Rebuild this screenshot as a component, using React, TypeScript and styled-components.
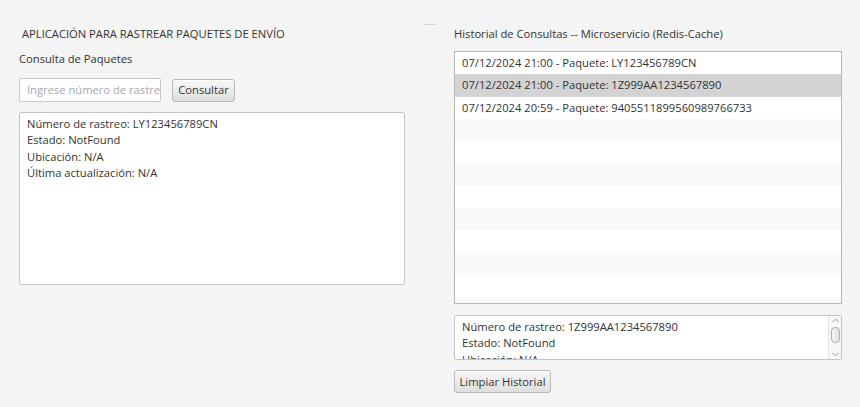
import React from "react";
import styled, { createGlobalStyle } from "styled-components";

const Global = createGlobalStyle`
  html, body { margin: 0; padding: 0; background: #f4f4f4; }
  body { font-family: "Open Sans", "Noto Sans", sans-serif; font-size: 11.2px; color: #333; }
`;

const Page = styled.div`
  width: 860px;
  height: 407px;
  box-sizing: border-box;
  padding: 24px 0 0 19px;
  display: grid;
  grid-template-columns: 386px 49px 388px;
  align-items: start;
  background: #f4f4f4;
`;

const Column = styled.div`
  display: flex;
  flex-direction: column;
`;

const Divider = styled.div`
  display: flex;
  justify-content: center;
  &::before {
    content: "";
    width: 10px;
    height: 1px;
    background: #d0d0d0;
  }
`;

const Title = styled.div<{ $indent?: number }>`
  margin-top: 2px;
  height: 16px;
  line-height: 16px;
  padding-left: ${(p) => p.$indent ?? 0}px;
  white-space: nowrap;
  color: #333;
`;

const Subtitle = styled.div`
  margin-top: 9px;
  height: 16px;
  line-height: 16px;
`;

const Row = styled.div`
  margin-top: 11px;
  display: flex;
  gap: 11px;
  align-items: center;
`;

const Input = styled.div`
  width: 142px;
  height: 24px;
  box-sizing: border-box;
  border: 1px solid #c8c8c8;
  border-radius: 2px;
  background: #fff;
  padding: 0 7px;
  line-height: 21px;
  color: #a9a9a9;
  white-space: nowrap;
  overflow: hidden;
`;

const Button = styled.div<{ $width: number }>`
  width: ${(p) => p.$width}px;
  height: 23px;
  box-sizing: border-box;
  border: 1px solid #b8b8b8;
  border-radius: 3px;
  background: linear-gradient(#f8f8f8, #dedede);
  box-shadow: inset 0 1px 0 #ffffff;
  display: flex;
  align-items: center;
  justify-content: center;
  padding-bottom: 1px;
  color: #333;
  white-space: nowrap;
`;

const TextArea = styled.div<{ $height: number; $top: number }>`
  position: relative;
  margin-top: ${(p) => p.$top}px;
  height: ${(p) => p.$height}px;
  box-sizing: border-box;
  border: 1px solid #c4c4c4;
  border-radius: 2px;
  background: #fff;
  padding: 3px 7px;
  overflow: hidden;
`;

const Line = styled.div`
  height: 16.3px;
  line-height: 16px;
  white-space: nowrap;
`;

const List = styled.div`
  margin-top: 9px;
  height: 253px;
  box-sizing: border-box;
  border: 1px solid #b9b9b9;
  background: #fff;
  overflow: hidden;
`;

const ListRow = styled.div<{ $selected?: boolean; $odd?: boolean }>`
  height: 22.3px;
  line-height: 22px;
  padding-left: 7px;
  white-space: nowrap;
  background: ${(p) => (p.$selected ? "#d3d3d3" : p.$odd ? "#f9f9f9" : "#ffffff")};
`;

const ScrollBar = styled.div`
  position: absolute;
  top: 0;
  right: 0;
  bottom: 0;
  width: 13px;
  border-left: 1px solid #e4e4e4;
  background: #f7f7f7;
  display: flex;
  flex-direction: column;
  align-items: center;
  justify-content: space-between;
  padding: 2px 0;
  box-sizing: border-box;
`;

const Thumb = styled.div`
  width: 9px;
  height: 16px;
  box-sizing: border-box;
  border: 1px solid #b0b0b0;
  border-radius: 4px;
  background: linear-gradient(90deg, #f4f4f4, #e2e2e2);
  margin-top: -6px;
`;

const Chevron = ({ up }: { up?: boolean }) => (
  <svg width="7" height="5" viewBox="0 0 7 5">
    <path
      d={up ? "M0.5 4 L3.5 1 L6.5 4" : "M0.5 1 L3.5 4 L6.5 1"}
      fill="none"
      stroke="#9a9a9a"
      strokeWidth="1"
    />
  </svg>
);

const ButtonRow = styled.div`
  margin-top: 10px;
  display: flex;
`;

const history = [
  "07/12/2024 21:00 - Paquete: LY123456789CN",
  "07/12/2024 21:00 - Paquete: 1Z999AA1234567890",
  "07/12/2024 20:59 - Paquete: 9405511899560989766733",
];

export default function App() {
  const rows = Array.from({ length: 12 }, (_, i) => history[i] ?? "");
  return (
    <>
      <Global />
      <Page>
        <Column>
          <Title $indent={3}>APLICACIÓN PARA RASTREAR PAQUETES DE ENVÍO</Title>
          <Subtitle>Consulta de Paquetes</Subtitle>
          <Row>
            <Input>Ingrese número de rastreo</Input>
            <Button $width={63}>Consultar</Button>
          </Row>
          <TextArea $height={173} $top={10}>
            <Line>Número de rastreo: LY123456789CN</Line>
            <Line>Estado: NotFound</Line>
            <Line>Ubicación: N/A</Line>
            <Line>Última actualización: N/A</Line>
          </TextArea>
        </Column>
        <Divider />
        <Column>
          <Title>Historial de Consultas -- Microservicio (Redis-Cache)</Title>
          <List>
            {rows.map((t, i) => (
              <ListRow key={i} $selected={i === 1} $odd={i % 2 === 1}>
                {t}
              </ListRow>
            ))}
          </List>
          <TextArea $height={45} $top={11}>
            <Line>Número de rastreo: 1Z999AA1234567890</Line>
            <Line>Estado: NotFound</Line>
            <Line>Ubicación: N/A</Line>
            <ScrollBar>
              <Chevron up />
              <Thumb />
              <Chevron />
            </ScrollBar>
          </TextArea>
          <ButtonRow>
            <Button $width={97}>Limpiar Historial</Button>
          </ButtonRow>
        </Column>
      </Page>
    </>
  );
}
